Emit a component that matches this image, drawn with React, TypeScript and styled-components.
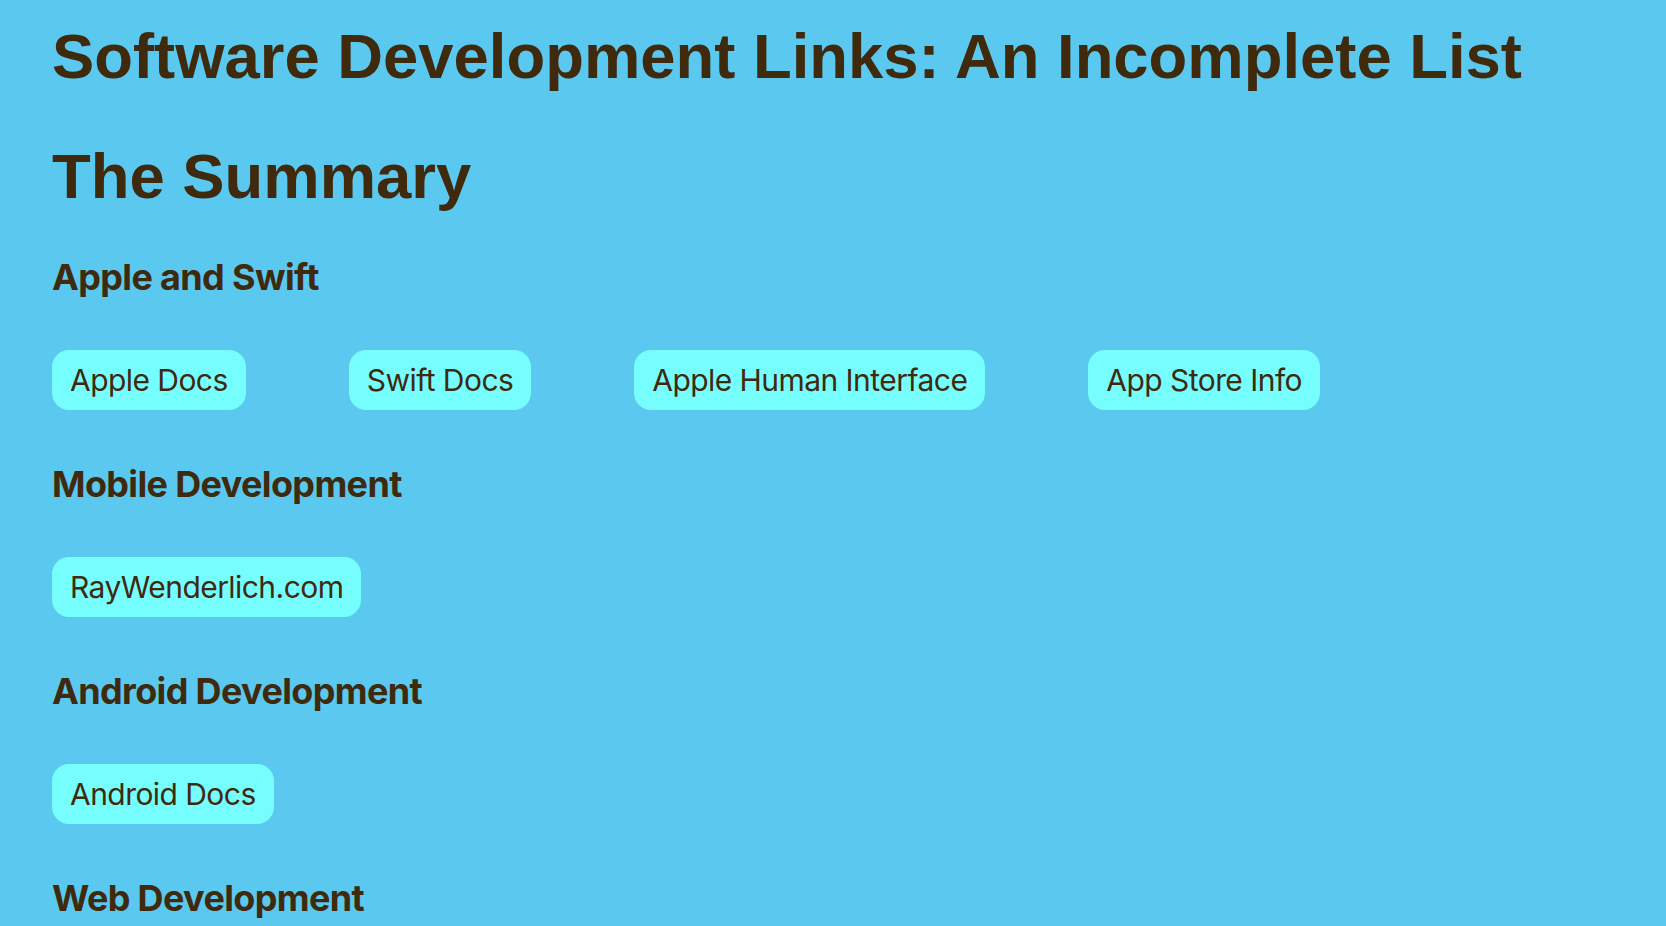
import React from "react";
import styled, { createGlobalStyle } from "styled-components";

const Global = createGlobalStyle`
  html, body {
    margin: 0;
    padding: 0;
    background: #5bc8f0;
  }
  body {
    font-family: Inter, "Noto Sans", sans-serif;
    color: #3f2a0e;
  }
`;

const Page = styled.main`
  min-height: 926px;
  box-sizing: border-box;
  padding: 24px 52px 0 52px;
  display: flex;
  flex-direction: column;
`;

const Title = styled.h1<{ $gap?: number }>`
  margin: 0 0 ${(p) => p.$gap ?? 0}px 0;
  font-family: "Liberation Sans", Arial, sans-serif;
  font-weight: 700;
  font-size: 63.4px;
  line-height: 64px;
  white-space: nowrap;
`;

const Section = styled.section`
  display: flex;
  flex-direction: column;
  gap: 55px;
  margin-bottom: 56px;
`;

const SectionHeading = styled.h3`
  margin: 0;
  font-family: Inter, "Noto Sans", sans-serif;
  font-weight: 700;
  font-size: 36px;
  line-height: 36px;
  letter-spacing: -0.65px;
`;

const LinkRow = styled.div`
  display: flex;
  gap: 103px;
`;

const LinkButton = styled.a`
  display: inline-block;
  height: 60px;
  line-height: 60px;
  padding: 0 18px;
  border-radius: 17px;
  background: #76feff;
  color: #3f2a0e;
  font-family: Inter, "Noto Sans", sans-serif;
  font-size: 30px;
  font-weight: 400;
  letter-spacing: -0.55px;
  text-decoration: none;
  white-space: nowrap;
`;

const sections: { title: string; links: string[] }[] = [
  {
    title: "Apple and Swift",
    links: ["Apple Docs", "Swift Docs", "Apple Human Interface", "App Store Info"],
  },
  { title: "Mobile Development", links: ["RayWenderlich.com"] },
  { title: "Android Development", links: ["Android Docs"] },
  { title: "Web Development", links: [] },
];

export default function App() {
  return (
    <>
      <Global />
      <Page>
        <Title $gap={56}>Software Development Links: An Incomplete List</Title>
        <Title as="h2" $gap={51}>
          The Summary
        </Title>
        {sections.map((s) => (
          <Section key={s.title}>
            <SectionHeading>{s.title}</SectionHeading>
            {s.links.length > 0 && (
              <LinkRow>
                {s.links.map((l) => (
                  <LinkButton key={l} href="#">
                    {l}
                  </LinkButton>
                ))}
              </LinkRow>
            )}
          </Section>
        ))}
      </Page>
    </>
  );
}
